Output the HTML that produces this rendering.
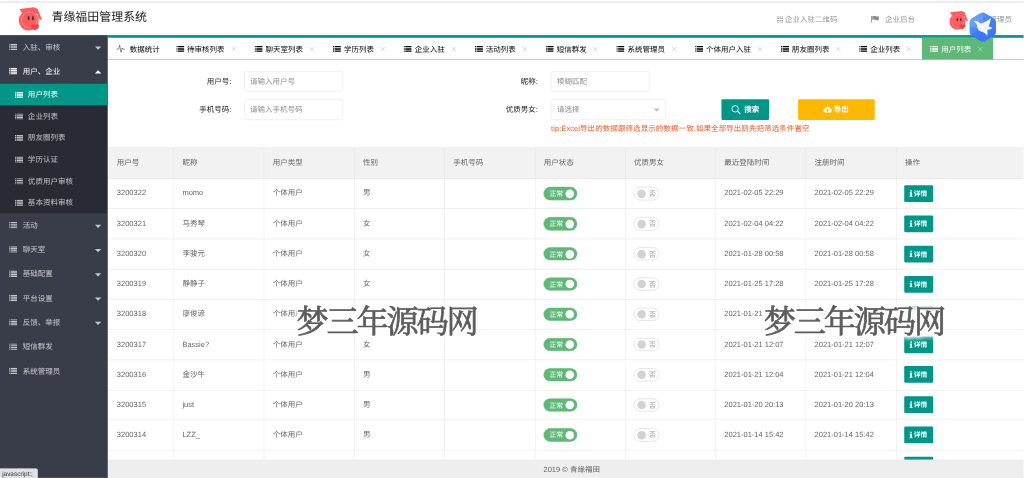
<!DOCTYPE html>
<html lang="zh-CN">
<head>
<meta charset="utf-8">
<title>青缘福田管理系统</title>
<style>
*{box-sizing:border-box;margin:0;padding:0}
html,body{width:1024px;height:478px;overflow:hidden;background:#fff}
body{font-family:"Liberation Sans","Noto Sans CJK SC",sans-serif;font-size:14px;color:#333;text-rendering:geometricPrecision}
ul,li{list-style:none}
i,em{font-style:normal}
#app{position:absolute;left:0;top:0;width:1910.45px;height:885.19px;transform-origin:0 0;transform:scale(0.536,0.54);overflow:hidden;background:#fff;filter:blur(0.3px)}
.chrome-line{position:absolute;left:0;top:3.4px;width:100%;height:1.8px;background:#d3d6db}
.header{position:absolute;left:0;top:5px;width:100%;height:60px;background:#fff}
.logo{position:absolute;left:34px;top:8px;width:45px;height:44px}
.title{position:absolute;left:96px;top:11px;font-size:22.3px;line-height:30px;color:#222;white-space:nowrap}
.hitem{position:absolute;top:21px;height:20px;line-height:20px;font-size:14px;color:#999;white-space:nowrap}
.hitem svg{position:absolute;top:4px}
.avatar{position:absolute;left:1771px;top:15px;width:35px;height:35px}
.hex{position:absolute;left:1807px;top:21.5px;width:53px;height:56.5px;z-index:50}
.side{position:absolute;left:0;top:65px;width:200px;bottom:0;background:#393D49;color:rgba(255,255,255,.7)}
.nav-item{position:relative;height:45px;line-height:45px;white-space:nowrap}
.nav-item.bright{color:#fff}
.nav-item .ic-list{position:absolute;left:17px;top:16.2px}
.nav-item span{position:absolute;left:42.5px;top:0}
.more{position:absolute;right:11.5px;top:21px;width:0;height:0;border:6px solid transparent;border-top-color:rgba(255,255,255,.7)}
.more.up{top:14px;border-top-color:transparent;border-bottom-color:#fff}
.nav-child{background:#282B33}
.child{position:relative;height:40px;line-height:40px;white-space:nowrap}
.child.this{background:#009688;color:#fff}
.child .ic-list{position:absolute;left:28px;top:14.5px}
.child span{position:absolute;left:52px;top:0}
.body{position:absolute;left:200px;top:65px;right:0;bottom:0;border-top:5px solid #009688;border-left:2px solid #fff;background:#fff}
.vline{position:absolute;left:107px;top:35px;width:1px;height:443px;background:#009688;z-index:100}
.tabs{position:absolute;left:0;top:0;right:0;height:41px;border-bottom:1.6px solid #62ba7b;white-space:nowrap;display:flex}
.tabs li{position:relative;height:40px;line-height:42px;color:#000;flex:none}
.tabs li.first{width:111.5px}
.tabs li.first svg{position:absolute;left:15px;top:12px;color:#444}
.tabs li.first span{position:absolute;left:40px;top:0}
.tabs li .ic-list{position:absolute;left:15px;top:14.5px}
.tabs li span{position:absolute;left:35.5px;top:0}
.tabs li .x{position:absolute;right:15px;top:11px;width:18px;height:18px;color:#bdbdbd}
.tabs li .x svg{position:absolute;left:4px;top:5px}
.tabs li.this{background:#5FB878;color:#fff}
.tabs li.this .x{color:#d8f0de}
.lbl{position:absolute;height:38px;line-height:38px;text-align:right;color:#222;white-space:nowrap;width:120px}
.inp{position:absolute;height:38px;border:1px solid #e6e6e6;border-radius:2px;background:#fff;line-height:36px;padding-left:10px;color:#8f8f8f;white-space:nowrap}
.edge{position:absolute;right:10px;top:16px;width:0;height:0;border:6px solid transparent;border-top-color:#c2c2c2}
.btn{position:absolute;height:38px;line-height:38px;border-radius:2px;color:#fff;white-space:nowrap;font-weight:bold}
.tip{position:absolute;left:826px;top:157px;line-height:20px;color:#FF5722;white-space:nowrap;letter-spacing:0.14px}
.table{position:absolute;left:0;top:203.1px;right:0;height:700px}
.thead{position:absolute;left:0;top:0;right:0;height:58.2px;background:#f2f2f2;border-bottom:1px solid #e6e6e6;border-top:1px solid #e9e9e9}
.th{position:absolute;top:0;height:57.2px;line-height:54px;border-left:1.2px solid #e4e4e4;padding-left:15.5px;color:#666;white-space:nowrap}
.th:first-child{border-left:none;padding-left:16px}
.tr{position:absolute;left:0;right:0;height:55.9px;border-bottom:1.2px solid #e4e4e4}
.td{position:absolute;top:0;height:55.9px;line-height:52.6px;border-left:1.2px solid #e8e8e8;padding-left:15.5px;color:#666;white-space:nowrap}
.td:first-child{border-left:none;padding-left:16px}
.td .n{position:relative;top:0px}
.sw{position:absolute;left:15.2px;top:15px;height:24.4px;border-radius:13px;font-size:12.8px;line-height:23px}
.sw.on{width:63.5px;background:#5FB878;border:1px solid #5FB878;color:#fff}
.sw.on span{position:absolute;left:10px;top:0}
.sw.on i{position:absolute;right:5px;top:3.5px;width:16px;height:16px;border-radius:50%;background:#fff}
.sw.off{width:47.6px;background:#fff;border:1px solid #d2d2d2;color:#999}
.sw.off i{position:absolute;left:6px;top:3.5px;width:16px;height:16px;border-radius:50%;background:#d2d2d2}
.sw.off span{position:absolute;left:27.5px;top:0}
.btn-sm{position:absolute;left:13.8px;top:11.8px;width:54px;height:31px;background:#009688;border-radius:2px;color:#fff;font-size:12.5px;line-height:33px;font-weight:bold}
.btn-sm svg{position:absolute;left:9.3px;top:9px}
.btn-sm span{position:absolute;left:18.3px;top:0}
.footer{position:absolute;left:202px;right:0;top:851px;bottom:0;background:#eee;z-index:5}
.footer span{position:absolute;left:812px;top:8px;line-height:20px;color:#666;white-space:nowrap}
.wm{position:absolute;top:562px;font-family:"Liberation Serif","Noto Serif CJK SC",serif;font-size:60px;letter-spacing:-4px;line-height:70px;color:#5c5c5c;white-space:nowrap;z-index:20;text-shadow:0 0 5px #fff,0 0 5px #fff,0 0 8px #fff,0 0 8px #fff,0 0 12px #fff,0 0 12px #fff,0 0 16px #fff,0 0 10px #fff,0 0 10px #fff,0 0 14px #fff,0 0 14px #fff;font-weight:400;-webkit-text-stroke:1.35px #5c5c5c}
.wm:before{content:'';position:absolute;left:8px;right:10px;top:12px;bottom:8px;background:rgba(255,255,255,.8);filter:blur(5px);z-index:-1}
.status{position:absolute;left:0;top:866.5px;width:71px;height:22px;background:#dee1e6;border-top-right-radius:5px;border:1px solid #c6c9ce;border-left:none;font-size:12px;line-height:18px;padding-left:4px;color:#333;z-index:30;white-space:nowrap}
</style>
</head>
<body>
<div id="app">
<div class="chrome-line"></div>
<div class="header">
<svg class="logo" viewBox="0 0 46 46"><polygon points="2.1,3.8 29.7,0.3 37.5,3.8 46,25 40.3,23.6 36,13 6.4,11.6" fill="#ff5c60"/><circle cx="20" cy="26.3" r="19.6" fill="#ff5c60"/><circle cx="21" cy="25" r="15.2" fill="none" stroke="#ffd0d0" stroke-width="0.8" opacity=".8"/><ellipse cx="19.8" cy="21.5" rx="1.7" ry="4.2" fill="#3a2a2a"/><ellipse cx="28.2" cy="21.5" rx="1.7" ry="4.2" fill="#3a2a2a"/><path d="M32.5 45.5c-8-5.5-8.5-9-6.8-11.3c1.7-2.2 5-1.7 6.8 0.8c1.8-2.5 5.1-3 6.8-0.8c1.7 2.300 1.200 5.800-6.800 11.300z" fill="#ff3d44"/></svg>
<div class="title">青缘福田管理系统</div>
<div class="hitem" style="left:1449px"><svg viewBox="0 0 12 12" width="12" height="12" style="left:0"><path d="M0 0h5v5H0zM1.200 1.200v2.600h2.600V1.200zM7 0h5v5H7zM8.200 1.200v2.600h2.600V1.200zM0 7h5v5H0zM1.200 8.200v2.600h2.600V8.200zM7 7h2v2H7zM10 7h2v2h-2zM7 10h2v2H7zM10 10h2v2h-2z" fill="#999" fill-rule="evenodd"/></svg><span style="margin-left:15.5px">企业入驻二维码</span></div>
<div class="hitem" style="left:1625px"><svg viewBox="0 0 15 13" width="15" height="13" style="left:0;top:3px"><path d="M0.300 0h1.500v13H0.300zM2.500 1c2-1.200 4-1 6 0s4 1 6-0.300v7c-2 1.300-4 1.300-6 0.300s-4-1.200-6 0z" fill="#888"/></svg><span style="margin-left:26px">企业后台</span></div>
<svg class="avatar" viewBox="0 0 46 46"><polygon points="2.1,3.8 29.7,0.3 37.5,3.8 46,25 40.3,23.6 36,13 6.4,11.6" fill="#ff5c60"/><circle cx="20" cy="26.3" r="19.6" fill="#ff5c60"/><circle cx="21" cy="25" r="15.2" fill="none" stroke="#ffd0d0" stroke-width="0.8" opacity=".8"/><ellipse cx="19.8" cy="21.5" rx="1.7" ry="4.2" fill="#3a2a2a"/><ellipse cx="28.2" cy="21.5" rx="1.7" ry="4.2" fill="#3a2a2a"/><path d="M32.5 45.5c-8-5.5-8.5-9-6.8-11.3c1.7-2.2 5-1.7 6.8 0.8c1.8-2.5 5.1-3 6.8-0.8c1.7 2.300 1.200 5.800-6.800 11.300z" fill="#ff3d44"/></svg>
<div class="hitem" style="left:1846px;color:#999">管理员</div>
</div>
<svg class="hex" viewBox="0 0 55 58" preserveAspectRatio="none"><defs><linearGradient id="hg" x1="0" y1="0" x2="1" y2="1"><stop offset="0" stop-color="#5d9bff"/><stop offset="1" stop-color="#2f6cf3"/></linearGradient></defs><path d="M23.5 2.300q4-2.300 8 0l17.500 10.100q4 2.300 4 6.900v19.400q0 4.600-4 6.900L31.500 55.700q-4 2.300-8 0L6 45.600q-4-2.300-4-6.900V19.300q0-4.600 4-6.900z" fill="url(#hg)"/><path d="M27.500 1L2.500 15.500v14L27.500 29z" fill="#8db8ff" opacity=".35"/><path d="M27.500 29L2.500 43.500L27.500 57z" fill="#1f55d8" opacity=".18"/><path d="M9.700 18C12 16.300 15 16.300 17.500 18L23.500 22.500C31 20 38 16 42.800 11.800C42.500 18 41 23 38.600 27.400L46.200 30.700C43 33 39.500 34.200 36.100 34C37 38 37 42 36.100 45.400C33 41.500 29.500 39 25.200 38C20 36 17 32 16.800 28.200C16.500 25 15.500 22.500 14.300 21.600C12.500 20 11 19 9.700 18Z" fill="#f2f6ff"/></svg>
<div class="side">
<div class="nav-item"><svg class="ic-list" viewBox="0 0 14 11" width="15" height="11.8"><path d="M0 0h2v2H0zM3 0h11v2H3zM0 3h2v2H0zM3 3h11v2H3zM0 6h2v2H0zM3 6h11v2H3zM0 9h2v2H0zM3 9h11v2H3z" fill="currentColor"/></svg><span>入驻、审核</span><i class="more"></i></div>
<div class="nav-item bright"><svg class="ic-list" viewBox="0 0 14 11" width="15" height="11.8"><path d="M0 0h2v2H0zM3 0h11v2H3zM0 3h2v2H0zM3 3h11v2H3zM0 6h2v2H0zM3 6h11v2H3zM0 9h2v2H0zM3 9h11v2H3z" fill="currentColor"/></svg><span>用户、企业</span><i class="more up"></i></div>
<div class="nav-child">
<div class="child this"><svg class="ic-list" viewBox="0 0 14 11" width="15" height="11.8"><path d="M0 0h2v2H0zM3 0h11v2H3zM0 3h2v2H0zM3 3h11v2H3zM0 6h2v2H0zM3 6h11v2H3zM0 9h2v2H0zM3 9h11v2H3z" fill="currentColor"/></svg><span>用户列表</span></div>
<div class="child"><svg class="ic-list" viewBox="0 0 14 11" width="15" height="11.8"><path d="M0 0h2v2H0zM3 0h11v2H3zM0 3h2v2H0zM3 3h11v2H3zM0 6h2v2H0zM3 6h11v2H3zM0 9h2v2H0zM3 9h11v2H3z" fill="currentColor"/></svg><span>企业列表</span></div>
<div class="child"><svg class="ic-list" viewBox="0 0 14 11" width="15" height="11.8"><path d="M0 0h2v2H0zM3 0h11v2H3zM0 3h2v2H0zM3 3h11v2H3zM0 6h2v2H0zM3 6h11v2H3zM0 9h2v2H0zM3 9h11v2H3z" fill="currentColor"/></svg><span>朋友圈列表</span></div>
<div class="child"><svg class="ic-list" viewBox="0 0 14 11" width="15" height="11.8"><path d="M0 0h2v2H0zM3 0h11v2H3zM0 3h2v2H0zM3 3h11v2H3zM0 6h2v2H0zM3 6h11v2H3zM0 9h2v2H0zM3 9h11v2H3z" fill="currentColor"/></svg><span>学历认证</span></div>
<div class="child"><svg class="ic-list" viewBox="0 0 14 11" width="15" height="11.8"><path d="M0 0h2v2H0zM3 0h11v2H3zM0 3h2v2H0zM3 3h11v2H3zM0 6h2v2H0zM3 6h11v2H3zM0 9h2v2H0zM3 9h11v2H3z" fill="currentColor"/></svg><span>优质用户审核</span></div>
<div class="child"><svg class="ic-list" viewBox="0 0 14 11" width="15" height="11.8"><path d="M0 0h2v2H0zM3 0h11v2H3zM0 3h2v2H0zM3 3h11v2H3zM0 6h2v2H0zM3 6h11v2H3zM0 9h2v2H0zM3 9h11v2H3z" fill="currentColor"/></svg><span>基本资料审核</span></div>
</div>
<div class="nav-item"><svg class="ic-list" viewBox="0 0 14 11" width="15" height="11.8"><path d="M0 0h2v2H0zM3 0h11v2H3zM0 3h2v2H0zM3 3h11v2H3zM0 6h2v2H0zM3 6h11v2H3zM0 9h2v2H0zM3 9h11v2H3z" fill="currentColor"/></svg><span>活动</span><i class="more"></i></div>
<div class="nav-item"><svg class="ic-list" viewBox="0 0 14 11" width="15" height="11.8"><path d="M0 0h2v2H0zM3 0h11v2H3zM0 3h2v2H0zM3 3h11v2H3zM0 6h2v2H0zM3 6h11v2H3zM0 9h2v2H0zM3 9h11v2H3z" fill="currentColor"/></svg><span>聊天室</span><i class="more"></i></div>
<div class="nav-item"><svg class="ic-list" viewBox="0 0 14 11" width="15" height="11.8"><path d="M0 0h2v2H0zM3 0h11v2H3zM0 3h2v2H0zM3 3h11v2H3zM0 6h2v2H0zM3 6h11v2H3zM0 9h2v2H0zM3 9h11v2H3z" fill="currentColor"/></svg><span>基础配置</span><i class="more"></i></div>
<div class="nav-item"><svg class="ic-list" viewBox="0 0 14 11" width="15" height="11.8"><path d="M0 0h2v2H0zM3 0h11v2H3zM0 3h2v2H0zM3 3h11v2H3zM0 6h2v2H0zM3 6h11v2H3zM0 9h2v2H0zM3 9h11v2H3z" fill="currentColor"/></svg><span>平台设置</span><i class="more"></i></div>
<div class="nav-item"><svg class="ic-list" viewBox="0 0 14 11" width="15" height="11.8"><path d="M0 0h2v2H0zM3 0h11v2H3zM0 3h2v2H0zM3 3h11v2H3zM0 6h2v2H0zM3 6h11v2H3zM0 9h2v2H0zM3 9h11v2H3z" fill="currentColor"/></svg><span>反馈、举报</span><i class="more"></i></div>
<div class="nav-item"><svg class="ic-list" viewBox="0 0 14 11" width="15" height="11.8"><path d="M0 0h2v2H0zM3 0h11v2H3zM0 3h2v2H0zM3 3h11v2H3zM0 6h2v2H0zM3 6h11v2H3zM0 9h2v2H0zM3 9h11v2H3z" fill="currentColor"/></svg><span>短信群发</span></div>
<div class="nav-item"><svg class="ic-list" viewBox="0 0 14 11" width="15" height="11.8"><path d="M0 0h2v2H0zM3 0h11v2H3zM0 3h2v2H0zM3 3h11v2H3zM0 6h2v2H0zM3 6h11v2H3zM0 9h2v2H0zM3 9h11v2H3z" fill="currentColor"/></svg><span>系统管理员</span></div>
</div>
<div class="body">
<ul class="tabs">
<li class="first"><svg class="ic-pulse" viewBox="0 0 16 16" width="16" height="16"><path d="M0.5 9H4.3L6.2 1.5L8.8 15L10.8 6.8L11.8 9H15.5" fill="none" stroke="currentColor" stroke-width="1.1" stroke-linejoin="round" stroke-linecap="round"/></svg><span>数据统计</span></li>
<li style="width:146.3px"><svg class="ic-list" viewBox="0 0 14 11" width="15" height="11.8"><path d="M0 0h2v2H0zM3 0h11v2H3zM0 3h2v2H0zM3 3h11v2H3zM0 6h2v2H0zM3 6h11v2H3zM0 9h2v2H0zM3 9h11v2H3z" fill="currentColor"/></svg><span>待审核列表</span><b class="x"><svg viewBox="0 0 10 10" width="10" height="10"><path d="M0.800 0.800L9.200 9.200M9.200 0.800L0.800 9.200" stroke="currentColor" stroke-width="1.1" fill="none"/></svg></b></li>
<li style="width:146.3px"><svg class="ic-list" viewBox="0 0 14 11" width="15" height="11.8"><path d="M0 0h2v2H0zM3 0h11v2H3zM0 3h2v2H0zM3 3h11v2H3zM0 6h2v2H0zM3 6h11v2H3zM0 9h2v2H0zM3 9h11v2H3z" fill="currentColor"/></svg><span>聊天室列表</span><b class="x"><svg viewBox="0 0 10 10" width="10" height="10"><path d="M0.800 0.800L9.200 9.200M9.200 0.800L0.800 9.200" stroke="currentColor" stroke-width="1.1" fill="none"/></svg></b></li>
<li style="width:132.3px"><svg class="ic-list" viewBox="0 0 14 11" width="15" height="11.8"><path d="M0 0h2v2H0zM3 0h11v2H3zM0 3h2v2H0zM3 3h11v2H3zM0 6h2v2H0zM3 6h11v2H3zM0 9h2v2H0zM3 9h11v2H3z" fill="currentColor"/></svg><span>学历列表</span><b class="x"><svg viewBox="0 0 10 10" width="10" height="10"><path d="M0.800 0.800L9.200 9.200M9.200 0.800L0.800 9.200" stroke="currentColor" stroke-width="1.1" fill="none"/></svg></b></li>
<li style="width:132.3px"><svg class="ic-list" viewBox="0 0 14 11" width="15" height="11.8"><path d="M0 0h2v2H0zM3 0h11v2H3zM0 3h2v2H0zM3 3h11v2H3zM0 6h2v2H0zM3 6h11v2H3zM0 9h2v2H0zM3 9h11v2H3z" fill="currentColor"/></svg><span>企业入驻</span><b class="x"><svg viewBox="0 0 10 10" width="10" height="10"><path d="M0.800 0.800L9.200 9.200M9.200 0.800L0.800 9.200" stroke="currentColor" stroke-width="1.1" fill="none"/></svg></b></li>
<li style="width:132.3px"><svg class="ic-list" viewBox="0 0 14 11" width="15" height="11.8"><path d="M0 0h2v2H0zM3 0h11v2H3zM0 3h2v2H0zM3 3h11v2H3zM0 6h2v2H0zM3 6h11v2H3zM0 9h2v2H0zM3 9h11v2H3z" fill="currentColor"/></svg><span>活动列表</span><b class="x"><svg viewBox="0 0 10 10" width="10" height="10"><path d="M0.800 0.800L9.200 9.200M9.200 0.800L0.800 9.200" stroke="currentColor" stroke-width="1.1" fill="none"/></svg></b></li>
<li style="width:132.3px"><svg class="ic-list" viewBox="0 0 14 11" width="15" height="11.8"><path d="M0 0h2v2H0zM3 0h11v2H3zM0 3h2v2H0zM3 3h11v2H3zM0 6h2v2H0zM3 6h11v2H3zM0 9h2v2H0zM3 9h11v2H3z" fill="currentColor"/></svg><span>短信群发</span><b class="x"><svg viewBox="0 0 10 10" width="10" height="10"><path d="M0.800 0.800L9.200 9.200M9.200 0.800L0.800 9.200" stroke="currentColor" stroke-width="1.1" fill="none"/></svg></b></li>
<li style="width:146.3px"><svg class="ic-list" viewBox="0 0 14 11" width="15" height="11.8"><path d="M0 0h2v2H0zM3 0h11v2H3zM0 3h2v2H0zM3 3h11v2H3zM0 6h2v2H0zM3 6h11v2H3zM0 9h2v2H0zM3 9h11v2H3z" fill="currentColor"/></svg><span>系统管理员</span><b class="x"><svg viewBox="0 0 10 10" width="10" height="10"><path d="M0.800 0.800L9.200 9.200M9.200 0.800L0.800 9.200" stroke="currentColor" stroke-width="1.1" fill="none"/></svg></b></li>
<li style="width:160.3px"><svg class="ic-list" viewBox="0 0 14 11" width="15" height="11.8"><path d="M0 0h2v2H0zM3 0h11v2H3zM0 3h2v2H0zM3 3h11v2H3zM0 6h2v2H0zM3 6h11v2H3zM0 9h2v2H0zM3 9h11v2H3z" fill="currentColor"/></svg><span>个体用户入驻</span><b class="x"><svg viewBox="0 0 10 10" width="10" height="10"><path d="M0.800 0.800L9.200 9.200M9.200 0.800L0.800 9.200" stroke="currentColor" stroke-width="1.1" fill="none"/></svg></b></li>
<li style="width:146.3px"><svg class="ic-list" viewBox="0 0 14 11" width="15" height="11.8"><path d="M0 0h2v2H0zM3 0h11v2H3zM0 3h2v2H0zM3 3h11v2H3zM0 6h2v2H0zM3 6h11v2H3zM0 9h2v2H0zM3 9h11v2H3z" fill="currentColor"/></svg><span>朋友圈列表</span><b class="x"><svg viewBox="0 0 10 10" width="10" height="10"><path d="M0.800 0.800L9.200 9.200M9.200 0.800L0.800 9.200" stroke="currentColor" stroke-width="1.1" fill="none"/></svg></b></li>
<li style="width:132.3px"><svg class="ic-list" viewBox="0 0 14 11" width="15" height="11.8"><path d="M0 0h2v2H0zM3 0h11v2H3zM0 3h2v2H0zM3 3h11v2H3zM0 6h2v2H0zM3 6h11v2H3zM0 9h2v2H0zM3 9h11v2H3z" fill="currentColor"/></svg><span>企业列表</span><b class="x"><svg viewBox="0 0 10 10" width="10" height="10"><path d="M0.800 0.800L9.200 9.200M9.200 0.800L0.800 9.200" stroke="currentColor" stroke-width="1.1" fill="none"/></svg></b></li>
<li class="this" style="width:132.3px"><svg class="ic-list" viewBox="0 0 14 11" width="15" height="11.8"><path d="M0 0h2v2H0zM3 0h11v2H3zM0 3h2v2H0zM3 3h11v2H3zM0 6h2v2H0zM3 6h11v2H3zM0 9h2v2H0zM3 9h11v2H3z" fill="currentColor"/></svg><span>用户列表</span><b class="x"><svg viewBox="0 0 10 10" width="10" height="10"><path d="M0.800 0.800L9.200 9.200M9.200 0.800L0.800 9.200" stroke="currentColor" stroke-width="1.1" fill="none"/></svg></b></li>
</ul>
<div class="lbl" style="left:109.5px;top:61.5px">用户号:</div>
<div class="inp" style="left:253.5px;top:61.5px;width:184px">请输入用户号</div>
<div class="lbl" style="left:109.500px;top:114px">手机号码:</div>
<div class="inp" style="left:253.5px;top:114px;width:184px">请输入手机号码</div>
<div class="lbl" style="left:681.5px;top:61.5px">昵称:</div>
<div class="inp" style="left:826px;top:61.5px;width:183.500px">模糊匹配</div>
<div class="lbl" style="left:681.5px;top:114px">优质男女:</div>
<div class="inp" style="left:826px;top:114px;width:213.5px">请选择<i class="edge"></i></div>
<div class="tip">tip:Excel导出的数据跟筛选显示的数据一致,如果全部导出则先把筛选条件置空</div>
<div class="btn" style="left:1143.5px;top:114px;width:89.5px;background:#009688"><svg viewBox="0 0 18 18" width="18" height="18" style="position:absolute;left:18.5px;top:10px"><circle cx="7.5" cy="7.5" r="6" fill="none" stroke="#fff" stroke-width="1.6"/><path d="M12 12l4.500 4.500" stroke="#fff" stroke-width="2" stroke-linecap="round"/></svg><span style="position:absolute;left:43px;top:0">搜索</span></div>
<div class="btn" style="left:1286.5px;top:114px;width:143px;background:#FFB800"><svg viewBox="0 0 16 12" width="16" height="12" style="position:absolute;left:47.5px;top:13px"><path d="M4 12a4 4 0 0 1-0.600-7.950A4.600 4.600 0 0 1 12.300 3.500A4.300 4.300 0 0 1 12 12z" fill="#fff"/><path d="M8 10.500l-2.800-3.200h1.800V4.500h2v2.800h1.800z" fill="#FFB800"/></svg><span style="position:absolute;left:67px;top:0">导出</span></div>
<div class="table">
<div class="thead">
<div class="th" style="left:0.0px;width:121.8px"><span>用户号</span></div>
<div class="th" style="left:121.8px;width:168.5px"><span>昵称</span></div>
<div class="th" style="left:290.2px;width:168.5px"><span>用户类型</span></div>
<div class="th" style="left:458.8px;width:168.5px"><span>性别</span></div>
<div class="th" style="left:627.2px;width:168.5px"><span>手机号码</span></div>
<div class="th" style="left:795.8px;width:168.5px"><span>用户状态</span></div>
<div class="th" style="left:964.2px;width:168.5px"><span>优质男女</span></div>
<div class="th" style="left:1132.8px;width:168.5px"><span>最近登陆时间</span></div>
<div class="th" style="left:1301.2px;width:168.5px"><span>注册时间</span></div>
<div class="th" style="left:1469.8px;width:240.7px"><span>操作</span></div>
</div>
<div class="tr" style="top:58.2px">
<div class="td" style="left:0.0px;width:121.8px"><span class="n">3200322</span></div>
<div class="td" style="left:121.8px;width:168.5px"><span class="n">momo</span></div>
<div class="td" style="left:290.2px;width:168.5px">个体用户</div>
<div class="td" style="left:458.8px;width:168.5px">男</div>
<div class="td" style="left:627.2px;width:168.5px"></div>
<div class="td" style="left:795.8px;width:168.5px"><em class="sw on"><span>正常</span><i></i></em></div>
<div class="td" style="left:964.2px;width:168.5px"><em class="sw off"><i></i><span>否</span></em></div>
<div class="td" style="left:1132.8px;width:168.5px"><span class="n">2021-02-05 22:29</span></div>
<div class="td" style="left:1301.2px;width:168.5px"><span class="n">2021-02-05 22:29</span></div>
<div class="td" style="left:1469.8px;width:240.7px"><a class="btn-sm"><svg class="ic-info" viewBox="0 0 6 12" width="7.5" height="12.5"><path d="M1.6 0h3v2.6h-3zM0.4 4h4.2v6.3h1.2V12H0.2v-1.7h1.3V5.7H0.4z" fill="#fff"/></svg><span>详情</span></a></div>
</div>
<div class="tr" style="top:114.1px">
<div class="td" style="left:0.0px;width:121.8px"><span class="n">3200321</span></div>
<div class="td" style="left:121.8px;width:168.5px">马秀琴</div>
<div class="td" style="left:290.2px;width:168.5px">个体用户</div>
<div class="td" style="left:458.8px;width:168.5px">女</div>
<div class="td" style="left:627.2px;width:168.5px"></div>
<div class="td" style="left:795.8px;width:168.5px"><em class="sw on"><span>正常</span><i></i></em></div>
<div class="td" style="left:964.2px;width:168.5px"><em class="sw off"><i></i><span>否</span></em></div>
<div class="td" style="left:1132.8px;width:168.5px"><span class="n">2021-02-04 04:22</span></div>
<div class="td" style="left:1301.2px;width:168.5px"><span class="n">2021-02-04 04:22</span></div>
<div class="td" style="left:1469.8px;width:240.7px"><a class="btn-sm"><svg class="ic-info" viewBox="0 0 6 12" width="7.5" height="12.5"><path d="M1.6 0h3v2.6h-3zM0.4 4h4.2v6.3h1.2V12H0.2v-1.7h1.3V5.7H0.4z" fill="#fff"/></svg><span>详情</span></a></div>
</div>
<div class="tr" style="top:170.0px">
<div class="td" style="left:0.0px;width:121.8px"><span class="n">3200320</span></div>
<div class="td" style="left:121.8px;width:168.5px">李骏元</div>
<div class="td" style="left:290.2px;width:168.5px">个体用户</div>
<div class="td" style="left:458.8px;width:168.5px">女</div>
<div class="td" style="left:627.2px;width:168.5px"></div>
<div class="td" style="left:795.8px;width:168.5px"><em class="sw on"><span>正常</span><i></i></em></div>
<div class="td" style="left:964.2px;width:168.5px"><em class="sw off"><i></i><span>否</span></em></div>
<div class="td" style="left:1132.8px;width:168.5px"><span class="n">2021-01-28 00:58</span></div>
<div class="td" style="left:1301.2px;width:168.5px"><span class="n">2021-01-28 00:58</span></div>
<div class="td" style="left:1469.8px;width:240.7px"><a class="btn-sm"><svg class="ic-info" viewBox="0 0 6 12" width="7.5" height="12.5"><path d="M1.6 0h3v2.6h-3zM0.4 4h4.2v6.3h1.2V12H0.2v-1.7h1.3V5.7H0.4z" fill="#fff"/></svg><span>详情</span></a></div>
</div>
<div class="tr" style="top:225.9px">
<div class="td" style="left:0.0px;width:121.8px"><span class="n">3200319</span></div>
<div class="td" style="left:121.8px;width:168.5px">静静子</div>
<div class="td" style="left:290.2px;width:168.5px">个体用户</div>
<div class="td" style="left:458.8px;width:168.5px">女</div>
<div class="td" style="left:627.2px;width:168.5px"></div>
<div class="td" style="left:795.8px;width:168.5px"><em class="sw on"><span>正常</span><i></i></em></div>
<div class="td" style="left:964.2px;width:168.5px"><em class="sw off"><i></i><span>否</span></em></div>
<div class="td" style="left:1132.8px;width:168.5px"><span class="n">2021-01-25 17:28</span></div>
<div class="td" style="left:1301.2px;width:168.5px"><span class="n">2021-01-25 17:28</span></div>
<div class="td" style="left:1469.8px;width:240.7px"><a class="btn-sm"><svg class="ic-info" viewBox="0 0 6 12" width="7.5" height="12.5"><path d="M1.6 0h3v2.6h-3zM0.4 4h4.2v6.3h1.2V12H0.2v-1.7h1.3V5.7H0.4z" fill="#fff"/></svg><span>详情</span></a></div>
</div>
<div class="tr" style="top:281.8px">
<div class="td" style="left:0.0px;width:121.8px"><span class="n">3200318</span></div>
<div class="td" style="left:121.8px;width:168.5px">廖俊谚</div>
<div class="td" style="left:290.2px;width:168.5px">个体用户</div>
<div class="td" style="left:458.8px;width:168.5px">女</div>
<div class="td" style="left:627.2px;width:168.5px"></div>
<div class="td" style="left:795.8px;width:168.5px"><em class="sw on"><span>正常</span><i></i></em></div>
<div class="td" style="left:964.2px;width:168.5px"><em class="sw off"><i></i><span>否</span></em></div>
<div class="td" style="left:1132.8px;width:168.5px"><span class="n">2021-01-21 15:36</span></div>
<div class="td" style="left:1301.2px;width:168.5px"><span class="n">2021-01-21 15:36</span></div>
<div class="td" style="left:1469.8px;width:240.7px"><a class="btn-sm"><svg class="ic-info" viewBox="0 0 6 12" width="7.5" height="12.5"><path d="M1.6 0h3v2.6h-3zM0.4 4h4.2v6.3h1.2V12H0.2v-1.7h1.3V5.7H0.4z" fill="#fff"/></svg><span>详情</span></a></div>
</div>
<div class="tr" style="top:337.7px">
<div class="td" style="left:0.0px;width:121.8px"><span class="n">3200317</span></div>
<div class="td" style="left:121.8px;width:168.5px"><span class="n">Bassie?</span></div>
<div class="td" style="left:290.2px;width:168.5px">个体用户</div>
<div class="td" style="left:458.8px;width:168.5px">女</div>
<div class="td" style="left:627.2px;width:168.5px"></div>
<div class="td" style="left:795.8px;width:168.5px"><em class="sw on"><span>正常</span><i></i></em></div>
<div class="td" style="left:964.2px;width:168.5px"><em class="sw off"><i></i><span>否</span></em></div>
<div class="td" style="left:1132.8px;width:168.5px"><span class="n">2021-01-21 12:07</span></div>
<div class="td" style="left:1301.2px;width:168.5px"><span class="n">2021-01-21 12:07</span></div>
<div class="td" style="left:1469.8px;width:240.7px"><a class="btn-sm"><svg class="ic-info" viewBox="0 0 6 12" width="7.5" height="12.5"><path d="M1.6 0h3v2.6h-3zM0.4 4h4.2v6.3h1.2V12H0.2v-1.7h1.3V5.7H0.4z" fill="#fff"/></svg><span>详情</span></a></div>
</div>
<div class="tr" style="top:393.6px">
<div class="td" style="left:0.0px;width:121.8px"><span class="n">3200316</span></div>
<div class="td" style="left:121.8px;width:168.5px">金沙牛</div>
<div class="td" style="left:290.2px;width:168.5px">个体用户</div>
<div class="td" style="left:458.8px;width:168.5px">男</div>
<div class="td" style="left:627.2px;width:168.5px"></div>
<div class="td" style="left:795.8px;width:168.5px"><em class="sw on"><span>正常</span><i></i></em></div>
<div class="td" style="left:964.2px;width:168.5px"><em class="sw off"><i></i><span>否</span></em></div>
<div class="td" style="left:1132.8px;width:168.5px"><span class="n">2021-01-21 12:04</span></div>
<div class="td" style="left:1301.2px;width:168.5px"><span class="n">2021-01-21 12:04</span></div>
<div class="td" style="left:1469.8px;width:240.7px"><a class="btn-sm"><svg class="ic-info" viewBox="0 0 6 12" width="7.5" height="12.5"><path d="M1.6 0h3v2.6h-3zM0.4 4h4.2v6.3h1.2V12H0.2v-1.7h1.3V5.7H0.4z" fill="#fff"/></svg><span>详情</span></a></div>
</div>
<div class="tr" style="top:449.5px">
<div class="td" style="left:0.0px;width:121.8px"><span class="n">3200315</span></div>
<div class="td" style="left:121.8px;width:168.5px"><span class="n">just</span></div>
<div class="td" style="left:290.2px;width:168.5px">个体用户</div>
<div class="td" style="left:458.8px;width:168.5px">男</div>
<div class="td" style="left:627.2px;width:168.5px"></div>
<div class="td" style="left:795.8px;width:168.5px"><em class="sw on"><span>正常</span><i></i></em></div>
<div class="td" style="left:964.2px;width:168.5px"><em class="sw off"><i></i><span>否</span></em></div>
<div class="td" style="left:1132.8px;width:168.5px"><span class="n">2021-01-20 20:13</span></div>
<div class="td" style="left:1301.2px;width:168.5px"><span class="n">2021-01-20 20:13</span></div>
<div class="td" style="left:1469.8px;width:240.7px"><a class="btn-sm"><svg class="ic-info" viewBox="0 0 6 12" width="7.5" height="12.5"><path d="M1.6 0h3v2.6h-3zM0.4 4h4.2v6.3h1.2V12H0.2v-1.7h1.3V5.7H0.4z" fill="#fff"/></svg><span>详情</span></a></div>
</div>
<div class="tr" style="top:505.4px">
<div class="td" style="left:0.0px;width:121.8px"><span class="n">3200314</span></div>
<div class="td" style="left:121.8px;width:168.5px"><span class="n">LZZ_</span></div>
<div class="td" style="left:290.2px;width:168.5px">个体用户</div>
<div class="td" style="left:458.8px;width:168.5px">男</div>
<div class="td" style="left:627.2px;width:168.5px"></div>
<div class="td" style="left:795.8px;width:168.5px"><em class="sw on"><span>正常</span><i></i></em></div>
<div class="td" style="left:964.2px;width:168.5px"><em class="sw off"><i></i><span>否</span></em></div>
<div class="td" style="left:1132.8px;width:168.5px"><span class="n">2021-01-14 15:42</span></div>
<div class="td" style="left:1301.2px;width:168.5px"><span class="n">2021-01-14 15:42</span></div>
<div class="td" style="left:1469.8px;width:240.7px"><a class="btn-sm"><svg class="ic-info" viewBox="0 0 6 12" width="7.5" height="12.5"><path d="M1.6 0h3v2.6h-3zM0.4 4h4.2v6.3h1.2V12H0.2v-1.7h1.3V5.7H0.4z" fill="#fff"/></svg><span>详情</span></a></div>
</div>
<div class="tr" style="top:561.3px">
<div class="td" style="left:0.0px;width:121.8px"><span class="n">3200313</span></div>
<div class="td" style="left:121.8px;width:168.5px"></div>
<div class="td" style="left:290.2px;width:168.5px"></div>
<div class="td" style="left:458.8px;width:168.5px"></div>
<div class="td" style="left:627.2px;width:168.5px"></div>
<div class="td" style="left:795.8px;width:168.5px"></div>
<div class="td" style="left:964.2px;width:168.5px"></div>
<div class="td" style="left:1132.8px;width:168.5px"></div>
<div class="td" style="left:1301.2px;width:168.5px"></div>
<div class="td" style="left:1469.8px;width:240.7px"><a class="btn-sm"><svg class="ic-info" viewBox="0 0 6 12" width="7.5" height="12.5"><path d="M1.6 0h3v2.6h-3zM0.4 4h4.2v6.3h1.2V12H0.2v-1.7h1.3V5.7H0.4z" fill="#fff"/></svg><span>详情</span></a></div>
</div>
</div>
</div>
<div class="wm" style="left:553px">梦三年源码网</div>
<div class="wm" style="left:1425px">梦三年源码网</div>
<div class="footer"><span>2019 © 青缘福田</span></div>
<div class="status">javascript:;</div>
</div>
<div class="vline"></div>
</body>
</html>
